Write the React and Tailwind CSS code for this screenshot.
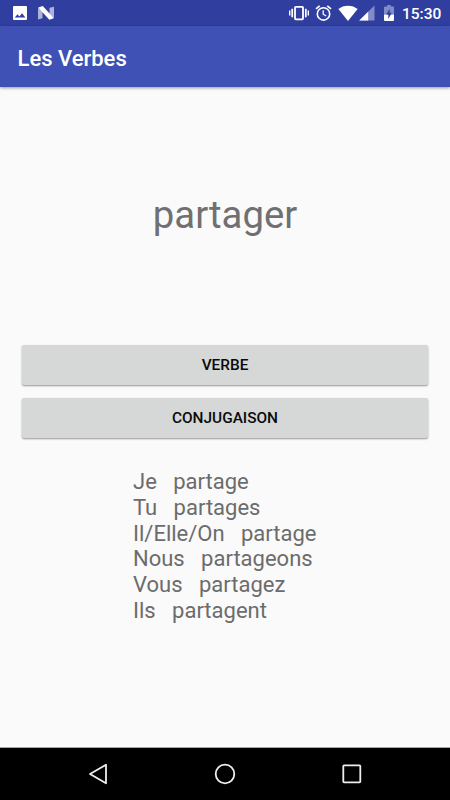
const conjugations = [
  ['Je', 'partage'],
  ['Tu', 'partages'],
  ['Il/Elle/On', 'partage'],
  ['Nous', 'partageons'],
  ['Vous', 'partagez'],
  ['Ils', 'partagent'],
];

function StatusBar() {
  return (
    <div className="flex h-[26px] shrink-0 items-center bg-[#303f9f] text-white">
      <svg className="ml-[13px] h-[14px] w-[14px]" viewBox="0 0 14 14" fill="none">
        <rect width="14" height="14" rx="1" fill="#fff" />
        <path d="M1.8 11.5 4.5 8.3l1.9 2.300L9 7.200l3.400 4.300z" fill="#303f9f" />
      </svg>
      <svg className="ml-[11px] h-[14px] w-[16px]" viewBox="0 0 16 14">
        <path d="M0 1.700 4.500 5v7.200L0 13.500zM16 .7v11.400L11.500 9V1.800z" fill="#fff" opacity=".6" />
        <path d="M.2 1.600 4.800.1 15.800 12.200 11.300 13.800z" fill="#fff" />
      </svg>
      <div className="grow" />
      <svg className="h-[16px] w-[20px]" viewBox="0 0 20 16" fill="none" stroke="#fff">
        <rect x="6" y="1.800" width="8" height="12.600" rx=".8" strokeWidth="1.800" />
        <path d="M3.200 3.800v8.400M16.800 3.800v8.400" strokeWidth="1.700" />
        <path d="M.7 5.600v4.800M19.300 5.600v4.800" strokeWidth="1.400" />
      </svg>
      <svg className="ml-[6px] h-[16px] w-[17px]" viewBox="0 0 17 16" fill="none" stroke="#fff" strokeWidth="1.600">
        <circle cx="8.500" cy="8.900" r="6.200" />
        <path d="m1 3.900 3.700-3.100M16 3.900 12.300.8" strokeWidth="1.700" />
        <path d="M8.200 5.300v3.900l3 1.800" strokeWidth="1.300" />
      </svg>
      <svg className="ml-[6px] h-[16px] w-[20px]" viewBox="0 0 20 16">
        <path d="M.4 4.100C3 2 6.400.8 10 .8s7 1.200 9.600 3.300L10 16z" fill="#fff" />
      </svg>
      <svg className="ml-[1px] h-[16px] w-[16px]" viewBox="0 0 16 16">
        <path d="M.2 15.600 15.500.400v15.200z" fill="#fff" opacity=".4" />
        <path d="M.2 15.600 9.200 6.700v8.900z" fill="#fff" />
      </svg>
      <svg className="ml-[9px] h-[16px] w-[10px]" viewBox="0 0 10 16">
        <path d="M3.200 0h3.600v1.600H9q1 0 1 1V9.600H0v-7q0-1 1-1h2.200z" fill="#fff" opacity=".4" />
        <path d="M0 9.600h10V15q0 1-1 1H1q-1 0-1-1z" fill="#fff" />
        <path d="M5.700 3.800v3.900h2.100l-3.500 6.200v-4.300H2.200z" fill="#303f9f" />
      </svg>
      <span className="mt-[2px] mr-[10px] ml-[8px] w-[38px] text-[15.500px] leading-[18px] font-medium whitespace-nowrap">15:30</span>
    </div>
  );
}

function VerbButton({ children }) {
  return (
    <button className="h-[40px] w-full rounded-[2px] bg-[#d6d7d7] pt-[2px] text-[15.400px] font-medium text-[#0a0a0a] shadow-[0_1px_2px_rgba(0,0,0,0.4)]">
      {children}
    </button>
  );
}

export default function App() {
  return (
    <div className="flex h-[800px] w-[450px] flex-col overflow-hidden bg-[#fafafa] font-[Roboto,sans-serif]">
      <StatusBar />
      <header className="flex h-[61px] shrink-0 items-center bg-[#3f51b5] px-[17.500px] pt-[4px] shadow-[0_1px_3px_rgba(0,0,0,0.4)]">
        <h1 className="text-[22px] leading-[26px] font-medium text-white">Les Verbes</h1>
      </header>
      <main className="flex grow flex-col">
        <h2 className="mt-[105px] text-center text-[38.300px] leading-[46px] text-[#707070]">partager</h2>
        <div className="mt-[107px] flex flex-col gap-[12.500px] px-[22px]">
          <VerbButton>VERBE</VerbButton>
          <VerbButton>CONJUGAISON</VerbButton>
        </div>
        <div className="mt-[31.600px] ml-[133px] text-[22px] leading-[25.800px] text-[#6c6c6c]">
          {conjugations.map(([pronoun, verb]) => (
            <p key={pronoun} className="whitespace-pre">{`${pronoun}   ${verb}`}</p>
          ))}
        </div>
      </main>
      <nav className="flex h-[53px] shrink-0 items-center border-t border-[#a6a6a6] bg-black">
        <svg className="ml-[88px] h-[22px] w-[20px]" viewBox="0 0 20 22" fill="none" stroke="#eee" strokeWidth="1.800" strokeLinejoin="round">
          <path d="M2 11 18 1.700v18.600z" />
        </svg>
        <svg className="ml-[106px] h-[22px] w-[22px]" viewBox="0 0 22 22" fill="none" stroke="#eee" strokeWidth="1.800">
          <circle cx="11" cy="11" r="9.300" />
        </svg>
        <svg className="ml-[105px] h-[22px] w-[22px]" viewBox="0 0 22 22" fill="none" stroke="#eee" strokeWidth="1.800">
          <rect x="2.300" y="2.300" width="17" height="17" rx=".8" />
        </svg>
      </nav>
    </div>
  );
}
